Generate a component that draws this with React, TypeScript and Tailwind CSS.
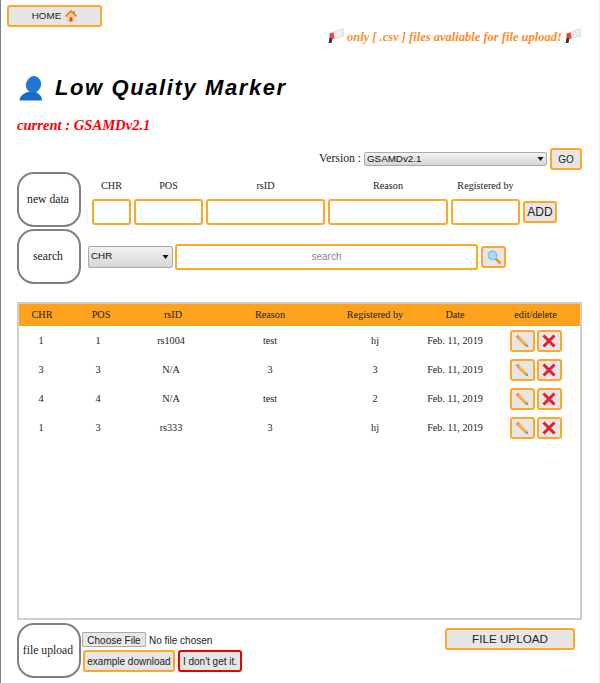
const serif = "font-['Liberation_Serif',serif]";
const sans = "font-['Liberation_Sans',sans-serif]";
const base = "bg-[#e6e6e6] border-2 rounded-[3px] text-[#222] flex items-center justify-center whitespace-nowrap " + sans;
const btn = base + " border-[#ffa726]";

const rows = [
  ["1", "1", "rs1004", "test", "hj", "Feb. 11, 2019"],
  ["3", "3", "N/A", "3", "3", "Feb. 11, 2019"],
  ["4", "4", "N/A", "test", "2", "Feb. 11, 2019"],
  ["1", "3", "rs333", "3", "hj", "Feb. 11, 2019"],
];
const head = ["CHR", "POS", "rsID", "Reason", "Registered by", "Date", "edit/delete"];

function Megaphone() {
  return (
    <svg width="16" height="15" viewBox="0 0 16 15" className="inline-block align-[-2px]">
      <path d="M15 0.5 L16 8 L6 10.5 L5 4.5 Z" fill="#eeeeee" stroke="#c9c9c9" strokeWidth="0.6" />
      <path d="M1.5 5.5 L5.5 4.2 L6.5 10.4 L1.5 10.5 Z" fill="#f44336" />
      <path d="M1.5 10 L4.5 10 L3.5 15 L0.6 15 Z" fill="#333333" />
    </svg>
  );
}

function House() {
  return (
    <svg width="12" height="12" viewBox="0 0 13 13" className="inline-block ml-[4px] align-[-2px]">
      <path d="M2 6 L2 12.5 L11 12.5 L11 6 L6.5 2 Z" fill="#f6cf8d" />
      <rect x="5" y="8" width="3" height="4.5" fill="#d84a2a" />
      <rect x="9" y="1.5" width="1.6" height="3" fill="#a1673c" />
      <path d="M0.5 7 L6.5 1 L12.5 7" fill="none" stroke="#e8792b" strokeWidth="1.7" />
    </svg>
  );
}

function Person() {
  return (
    <svg width="24" height="25" viewBox="0 0 24 25" className="shrink-0">
      <ellipse cx="14.5" cy="8.5" rx="7.5" ry="8.5" transform="rotate(18 14.5 8.5)" fill="#1e78d6" />
      <path d="M0.5 24.5 C1 19 5 17.5 9 16 L17 16 C20 18 23 20 23 24.5 Z" fill="#1a6cc8" />
    </svg>
  );
}

function Lens() {
  return (
    <svg width="14" height="14" viewBox="0 0 15 15">
      <path d="M9 9 L13.5 13.5" stroke="#ef8a1c" strokeWidth="2.6" strokeLinecap="round" />
      <circle cx="5.8" cy="5.8" r="4.6" fill="#a9dcf7" stroke="#7db8e2" strokeWidth="1.2" />
    </svg>
  );
}

function Pencil() {
  return (
    <svg width="14" height="14" viewBox="0 0 14 14">
      <path d="M3 0.8 L12 9.8 L9.8 12 L0.8 3 Z" fill="#f6a623" />
      <path d="M3 0.8 L0.8 3 L2.6 4.8 L4.8 2.6 Z" fill="#f08a80" />
      <path d="M12 9.8 L13.6 13.6 L9.8 12 Z" fill="#8a8a8a" />
      <path d="M4 3 L11 10" stroke="#ffd166" strokeWidth="1" />
    </svg>
  );
}

function Cross() {
  return (
    <svg width="14" height="14" viewBox="0 0 14 14">
      <path d="M1.5 1.5 L12.5 12.5 M12.5 1.5 L1.5 12.5" stroke="#e5202e" strokeWidth="3" />
    </svg>
  );
}

function Arrow({ className }: { className: string }) {
  return (
    <svg width="7" height="5" viewBox="0 0 7 5" className={"absolute top-1/2 -translate-y-1/2 pointer-events-none " + className}>
      <path d="M0.5 0.5 L6.5 0.5 L3.5 4.5 Z" fill="#111" />
    </svg>
  );
}

function Tag({ children }: { children: React.ReactNode }) {
  return (
    <div className={"w-[64px] h-[55px] shrink-0 border-2 border-[#808080] rounded-[17px] flex items-center justify-center pr-[2px] text-[11.7px] text-[#222] " + serif}>
      {children}
    </div>
  );
}

function Field({ w }: { w: string }) {
  return <input className={"h-[26px] border-2 border-[#ffa726] rounded-[3px] bg-white " + w} />;
}

const selectCls = "appearance-none bg-gradient-to-b from-[#f2f2f2] to-[#d6d6d6] border border-[#aaaaaa] rounded-[2px] text-[#111] text-[9.8px] pl-[2px] block " + sans;

export default function App() {
  return (
    <div className="w-[600px] h-[683px] overflow-hidden bg-white border-l border-l-[#808080] border-r border-r-[#eeeeee] box-border">
      <div className="pl-[6px] pt-[5px]">
        <button className={btn + " w-[95px] h-[22px] text-[9.8px]"}>HOME<House /></button>
      </div>
      <p className={"mt-[1px] mr-[18px] text-right text-[12.5px] leading-[18px] font-bold italic text-[#ff8c26] " + serif}>
        <Megaphone /> only [ .csv ] files avaliable for file upload! <Megaphone />
      </p>
      <h1 className={"mt-[28px] ml-[18px] flex items-center text-[22px] leading-[28px] font-bold italic tracking-[1.6px] text-black " + sans}>
        <span className="mr-[12px]"><Person /></span>Low Quality Marker
      </h1>
      <p className={"mt-[13px] ml-[16px] text-[14.6px] leading-[20px] font-bold italic text-[#ff0000] " + serif}>current : GSAMDv2.1</p>
      <div className="mt-[13px] mr-[17px] h-[22px] flex items-center justify-end">
        <span className={"text-[11.7px] text-[#222] mr-[3px] " + serif}>Version :</span>
        <div className="relative">
          <select className={selectCls + " w-[183px] h-[14px] leading-none"}>
            <option>GSAMDv2.1</option>
          </select>
          <Arrow className="right-[3px]" />
        </div>
        <button className={btn + " ml-[3px] w-[32px] h-[22px] text-[10px]"}>GO</button>
      </div>
      <div className="ml-[16px] mt-[2px] flex">
        <Tag>new data</Tag>
        <div className="ml-[11px] flex flex-col">
          <div className={"h-[27px] flex items-center text-[10.2px] text-[#222] text-center " + serif}>
            <span className="w-[39px]">CHR</span>
            <span className="w-[69px] ml-[3px]">POS</span>
            <span className="w-[119px] ml-[3px]">rsID</span>
            <span className="w-[120px] ml-[3px]">Reason</span>
            <span className="w-[69px] ml-[3px]">Registered by</span>
          </div>
          <div className="flex items-center gap-[3px]">
            <Field w="w-[39px]" />
            <Field w="w-[69px]" />
            <Field w="w-[119px]" />
            <Field w="w-[120px]" />
            <Field w="w-[69px]" />
            <button className={btn + " w-[34px] h-[22px] text-[12px]"}>ADD</button>
          </div>
        </div>
      </div>
      <div className="ml-[16px] mt-[2px] flex items-center">
        <Tag>search</Tag>
        <div className="ml-[7px] flex items-center">
          <div className="relative">
            <select className={selectCls + " w-[85px] h-[22px]"}>
              <option>CHR</option>
            </select>
            <Arrow className="right-[4px]" />
          </div>
          <input placeholder="search" className={"ml-[2px] w-[303px] h-[26px] border-2 border-[#ffa726] rounded-[3px] text-center text-[10px] placeholder:text-[#888] " + sans} />
          <button className={btn + " ml-[3px] w-[25px] h-[22px]"}><Lens /></button>
        </div>
      </div>
      <div className="ml-[16px] mt-[18px] w-[565px] h-[318px] border-2 border-[#cfcfcf] box-border">
        <div className={"grid grid-cols-[46px_72px_72px_122px_88px_72px_89px] h-[22px] items-center text-center text-[10.2px] text-[#222] bg-[#ffa31f] " + serif}>
          {head.map((h) => <span key={h}>{h}</span>)}
        </div>
        {rows.map((r, i) => (
          <div key={i} className={"grid grid-cols-[44px_70px_76px_122px_88px_72px_89px] h-[29px] items-center text-center text-[10.2px] text-[#222] " + serif}>
            {r.map((c, j) => <span key={j}>{c}</span>)}
            <div className="flex justify-center gap-[2px] pt-[1px]">
              <button className={btn + " w-[25px] h-[22px]"}><Pencil /></button>
              <button className={btn + " w-[25px] h-[22px]"}><Cross /></button>
            </div>
          </div>
        ))}
      </div>
      <div className="ml-[16px] mt-[3px] flex">
        <Tag>file upload</Tag>
        <div className="ml-[1px] flex flex-col">
          <input type="file" className={"mt-[9px] w-[200px] h-[15px] text-[10px] text-[#222] file:h-[15px] file:w-[64px] file:mr-[3px] file:px-0 file:bg-[#e8e8e8] file:border file:border-solid file:border-[#aaaaaa] file:rounded-[1px] file:text-[#222] " + sans} />
          <div className="mt-[3px] flex gap-[3px] ml-[1px]">
            <button className={btn + " w-[92px] h-[22px] text-[10px]"}>example download</button>
            <button className={base + " border-[#ee0000] w-[64px] h-[22px] text-[10px]"}>I don't get it.</button>
          </div>
        </div>
        <button className={btn + " ml-[163px] mt-[5px] w-[130px] h-[22px] text-[11.7px]"}>FILE UPLOAD</button>
      </div>
    </div>
  );
}
